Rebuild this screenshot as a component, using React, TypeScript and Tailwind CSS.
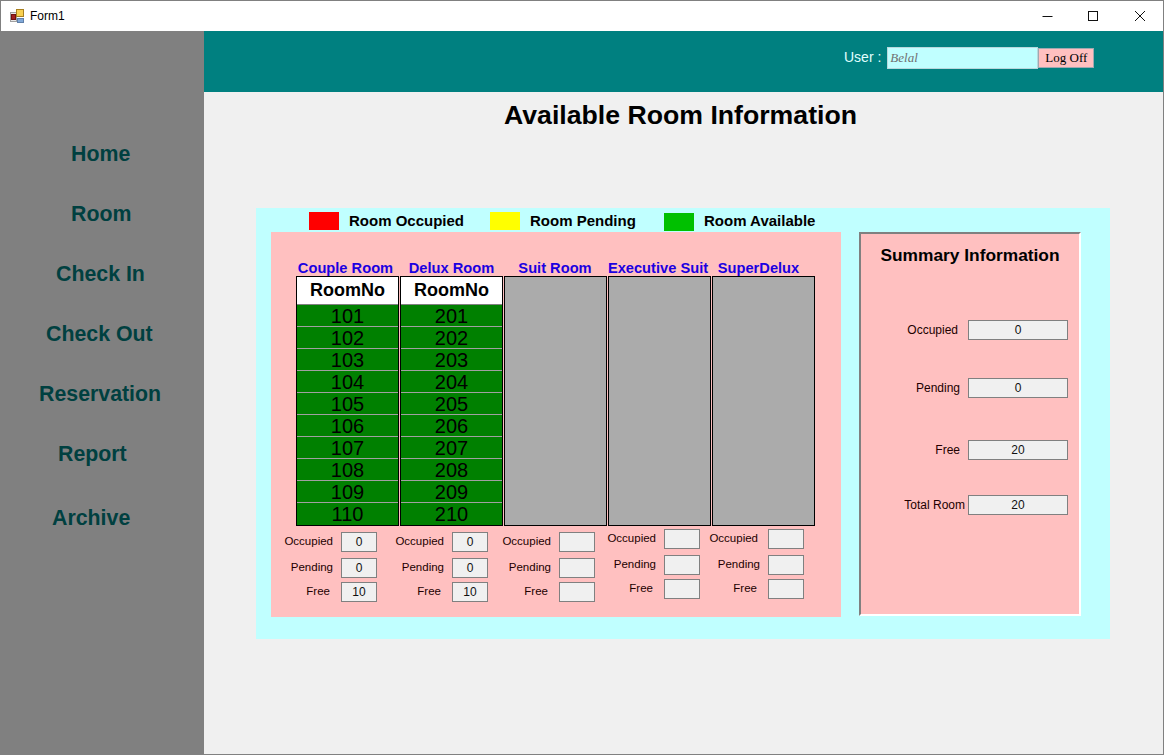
const navItems = [
  { label: 'Home', className: 'ml-[70px] mt-[111px]' },
  { label: 'Room', className: 'ml-[70px] mt-[36px]' },
  { label: 'Check In', className: 'ml-[55px] mt-[36px]' },
  { label: 'Check Out', className: 'ml-[45px] mt-[36px]' },
  { label: 'Reservation', className: 'ml-[38px] mt-[36px]' },
  { label: 'Report', className: 'ml-[57px] mt-[36px]' },
  { label: 'Archive', className: 'ml-[51px] mt-[40px]' },
];

const roomTypes = [
  { name: 'Couple Room', className: 'w-[99px] ml-[25px]' },
  { name: 'Delux Room', className: 'w-[113px]' },
  { name: 'Suit Room', className: 'w-[94px]' },
  { name: 'Executive Suit', className: 'w-[112px]' },
  { name: 'SuperDelux', className: 'w-[89px]' },
];

const statGroups = [
  { width: 'w-[106px]', top: 'mt-[6px]', occupiedGap: 'mr-[8px]', values: ['0', '0', '10'] },
  { width: 'w-[111px]', top: 'mt-[6px]', occupiedGap: 'mr-[8px]', values: ['0', '0', '10'] },
  { width: 'w-[107px]', top: 'mt-[6px]', occupiedGap: 'mr-[8px]', values: ['', '', ''] },
  { width: 'w-[105px]', top: 'mt-[3px]', occupiedGap: 'mr-[8px]', values: ['', '', ''] },
  { width: 'w-[104px]', top: 'mt-[3px]', occupiedGap: 'mr-[10px]', values: ['', '', ''] },
];

const summaryRows = [
  { label: 'Occupied', value: '0', className: 'mt-[54px]', gap: 'mr-[10px]' },
  { label: 'Pending', value: '0', className: 'mt-[38px]', gap: 'mr-[8px]' },
  { label: 'Free', value: '20', className: 'mt-[42px]', gap: 'mr-[8px]' },
  { label: 'Total Room', value: '20', className: 'mt-[35px]', gap: 'mr-[3px]' },
];

function FormIcon() {
  return (
    <svg width="15" height="15" viewBox="0 0 15 15" className="shrink-0">
      <rect x="0.5" y="3.5" width="6" height="9" fill="#e8e8e8" stroke="#a0a0a0" />
      <rect x="1.5" y="5.5" width="4" height="5" fill="#a02020" stroke="#701010" />
      <rect x="6.5" y="0.5" width="7" height="7" fill="#f8d050" stroke="#a88020" />
      <rect x="7.5" y="9.5" width="6" height="4" fill="#80a8d8" stroke="#6080a8" />
    </svg>
  );
}

function WindowButtons() {
  return (
    <div className="flex items-center">
      <svg width="46" height="30" viewBox="0 0 46 30">
        <path d="M17.5 15.5h10" stroke="#111" fill="none" />
      </svg>
      <svg width="46" height="30" viewBox="0 0 46 30">
        <rect x="17.5" y="10.5" width="9" height="9" stroke="#111" fill="none" />
      </svg>
      <svg width="46" height="30" viewBox="0 0 46 30">
        <path d="M18 10l10 10M28 10l-10 10" stroke="#111" fill="none" />
      </svg>
    </div>
  );
}

function RoomGrid({ start }: { start?: number }) {
  return (
    <div className="w-[103px] h-[250px] border border-black bg-[#ababab] flex flex-col">
      {start && (
        <>
          <div className="h-[28px] bg-white flex items-center justify-center text-[18px] font-bold text-black [-webkit-text-stroke:0px] border-b border-[#808080]">
            RoomNo
          </div>
          {Array.from({ length: 10 }, (_, i) => (
            <div
              key={i}
              className="h-[22px] bg-[#008000] border-b border-[#a0a0a0] last:border-b-0 flex items-center justify-center text-[20px] text-black"
            >
              {start + i}
            </div>
          ))}
        </>
      )}
    </div>
  );
}

function ValueBox({ value, className }: { value: string; className: string }) {
  return (
    <div
      className={`h-[20px] border border-[#808080] bg-[#f0f0f0] flex items-center justify-center text-[12px] text-[#111] ${className}`}
    >
      {value}
    </div>
  );
}

function StatGroup({ group }: { group: (typeof statGroups)[number] }) {
  return (
    <div className={`${group.width} ${group.top} flex flex-col items-end text-[11.5px] text-[#200]`}>
      <div className="flex items-center">
        <span className={group.occupiedGap}>Occupied</span>
        <ValueBox value={group.values[0]} className="w-[36px]" />
      </div>
      <div className="flex items-center mt-[6px]">
        <span className="mr-[8px]">Pending</span>
        <ValueBox value={group.values[1]} className="w-[36px]" />
      </div>
      <div className="flex items-center mt-[4px]">
        <span className="mr-[11px]">Free</span>
        <ValueBox value={group.values[2]} className="w-[36px]" />
      </div>
    </div>
  );
}

function LegendItem({ color, label, className }: { color: string; label: string; className: string }) {
  return (
    <div className={`flex items-center ${className}`}>
      <div className={`w-[30px] h-[18px] ${color}`} />
      <span className="ml-[10px] text-[15px] font-bold text-black">{label}</span>
    </div>
  );
}

export default function App() {
  return (
    <div className="w-[1164px] h-[755px] border border-[#808080] flex flex-col overflow-hidden font-['Liberation_Sans',Arial,sans-serif] bg-[#f0f0f0]">
      <div className="h-[30px] bg-white flex items-center justify-between shrink-0">
        <div className="flex items-center pl-[9px]">
          <FormIcon />
          <span className="ml-[5px] text-[12px] text-black">Form1</span>
        </div>
        <WindowButtons />
      </div>

      <div className="flex flex-1">
        <nav className="w-[203px] bg-[#808080] flex flex-col shrink-0 text-[21.33px] leading-[24px] font-bold text-[#004040]">
          {navItems.map((item) => (
            <div key={item.label} className={item.className}>
              {item.label}
            </div>
          ))}
        </nav>

        <main className="flex-1 flex flex-col">
          <div className="h-[61px] bg-[#008080] flex items-center pl-[640px] pb-[8px]">
            <span className="text-[14px] text-[#e0ffff]">User :</span>
            <div className="ml-[6px] w-[151px] h-[22px] bg-[#c0ffff] border border-[#b8d8dc] flex items-center pl-[2px] font-['Liberation_Serif',serif] italic text-[13px] text-[#707070]">
              Belal
            </div>
            <div className="w-[56px] h-[20px] bg-[#ffc0c0] border border-[#a0a8b0] flex items-center justify-center font-['Liberation_Serif',serif] text-[13px] text-black">
              Log Off
            </div>
          </div>

          <h1 className="mt-[8px] ml-[300px] text-[26.67px] leading-[30px] font-bold text-black whitespace-nowrap">
            Available Room Information
          </h1>

          <section className="mt-[78px] ml-[52px] w-[854px] h-[431px] bg-[#c0ffff] flex flex-col">
            <div className="flex h-[24px] pt-[2px]">
              <LegendItem color="bg-[#ff0000]" label="Room Occupied" className="ml-[53px] w-[181px]" />
              <LegendItem color="bg-[#ffff00]" label="Room Pending" className="w-[174px]" />
              <LegendItem color="bg-[#00c000]" label="Room Available" className="pt-[1px]" />
            </div>

            <div className="flex ml-[15px] mt-[0px]">
              <div className="w-[570px] h-[385px] bg-[#ffc0c0] flex flex-col">
                <div className="flex mt-[28px] h-[16px] items-center text-[14.67px] font-bold text-[#1c00e0] whitespace-nowrap">
                  {roomTypes.map((type) => (
                    <div key={type.name} className={`${type.className} text-center`}>
                      {type.name}
                    </div>
                  ))}
                </div>
                <div className="flex gap-[1px] ml-[25px]">
                  <RoomGrid start={101} />
                  <RoomGrid start={201} />
                  <RoomGrid />
                  <RoomGrid />
                  <RoomGrid />
                </div>
                <div className="flex">
                  {statGroups.map((group, i) => (
                    <StatGroup key={i} group={group} />
                  ))}
                </div>
              </div>

              <div className="ml-[18px] w-[222px] h-[384px] bg-[#ffc0c0] border-2 border-t-[#808080] border-l-[#808080] border-r-white border-b-white flex flex-col text-[12px] text-[#200]">
                <div className="mt-[10px] text-center text-[17.33px] leading-[22px] font-bold text-black">
                  Summary Information
                </div>
                {summaryRows.map((row) => (
                  <div key={row.label} className={`flex items-center justify-end pr-[11px] ${row.className}`}>
                    <span className={row.gap}>{row.label}</span>
                    <ValueBox value={row.value} className="w-[100px]" />
                  </div>
                ))}
              </div>
            </div>
          </section>
        </main>
      </div>
    </div>
  );
}
